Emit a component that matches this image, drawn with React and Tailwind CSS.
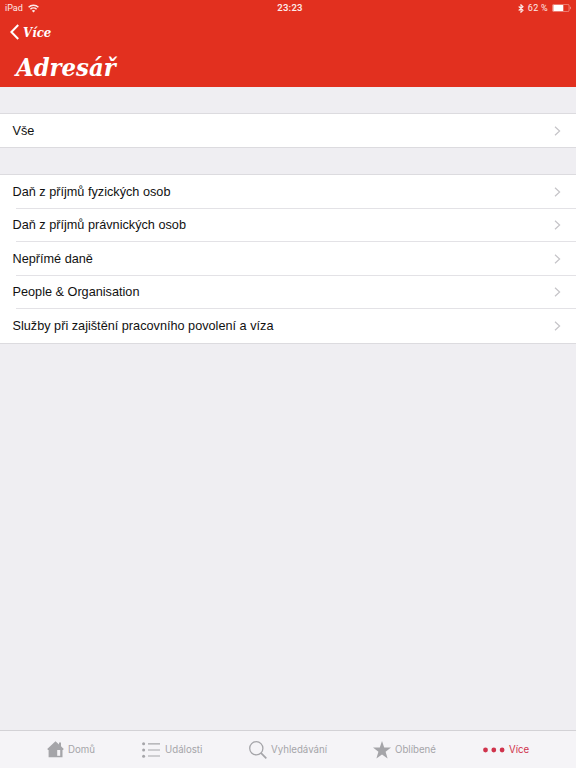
const SERVICES = [
  'Daň z příjmů fyzických osob',
  'Daň z příjmů právnických osob',
  'Nepřímé daně',
  'People & Organisation',
  'Služby při zajištění pracovního povolení a víza'
];

const WifiIcon = () => (
  <svg width="11" height="9" viewBox="0 0 11 9" fill="none" stroke="currentColor" strokeWidth="1.5">
    <path d="M0.6 3.2a7 7 0 0 1 9.8 0" />
    <path d="M2.4 5.2a4.4 4.4 0 0 1 6.2 0" />
    <path d="M5.5 8.6 3.8 6.8a2.5 2.5 0 0 1 3.4 0z" fill="currentColor" stroke="none" />
  </svg>
);

const BluetoothIcon = () => (
  <svg width="6" height="9" viewBox="0 0 6 9" fill="none" stroke="currentColor" strokeWidth="1.1">
    <path d="M0.7 2.5 5 6.3 3 8.2V0.8l2 1.9L0.7 6.5" />
  </svg>
);

const BatteryIcon = () => (
  <svg width="20" height="8" viewBox="0 0 20 8">
    <rect x="0.4" y="0.4" width="16.7" height="7.2" rx="1.4" fill="none" stroke="#fff" strokeOpacity="0.5" strokeWidth="0.8" />
    <rect x="1.3" y="1.1" width="10" height="5.8" rx="0.5" fill="#fff" />
    <path d="M18 2.6c1.1.4 1.1 2.4 0 2.8z" fill="#fff" fillOpacity="0.55" />
  </svg>
);

const HomeIcon = () => (
  <svg width="17" height="17" viewBox="0 0 17 17" fill="currentColor">
    <path d="M8.5 0.2 12 3.4V1.5h2v3.8l2.8 2.8-.9.9h-.4v7.3H1.6V9h-.5l-.9-.9z" />
    <path d="M10.2 9h3v5.8h-3z" fill="#f5f4f7" />
  </svg>
);

const ListIcon = () => (
  <svg width="18" height="16" viewBox="0 0 18 16" fill="currentColor">
    <circle cx="1.6" cy="1.8" r="1.5" />
    <circle cx="1.6" cy="8" r="1.5" />
    <circle cx="1.6" cy="14.2" r="1.5" />
    <path d="M6 1.3h12v1.2H6zM6 7.4h12v1.2H6zM6 13.4h12v1.2H6z" />
  </svg>
);

const SearchIcon = () => (
  <svg width="18" height="18" viewBox="0 0 18 18" fill="none" stroke="currentColor">
    <circle cx="7.3" cy="7.3" r="6.6" strokeWidth="1.3" />
    <path d="m12.1 12.1 5.2 5.2" strokeWidth="1.7" />
  </svg>
);

const StarIcon = () => (
  <svg width="18" height="18" viewBox="0 0 18 18" fill="currentColor">
    <path d="m9 0 2.2 6.5H18l-5.4 4.2 2 6.9L9 13.5l-5.6 4.1 2-6.9L0 6.5h6.8z" />
  </svg>
);

const MoreIcon = () => (
  <svg width="22" height="6" viewBox="0 0 22 6" fill="currentColor">
    <circle cx="2.5" cy="3" r="2.4" />
    <circle cx="10.8" cy="3" r="2.4" />
    <circle cx="19.1" cy="3" r="2.4" />
  </svg>
);

const ListRow = ({ label, last, className = 'h-[33.5px]' }) => (
  <li className={`relative flex items-center justify-between pr-[15px] pl-[12.5px] ${className}`}>
    <span className="pt-[1.5px] text-[12.7px] whitespace-nowrap">{label}</span>
    <svg width="7" height="10" viewBox="0 0 7 10" fill="none" stroke="#c5c4c8" strokeWidth="1.2">
      <path d="m1 .8 4.6 4.2L1 9.2" />
    </svg>
    {!last && <span className="absolute right-0 bottom-0 left-4 h-px bg-[#e3e2e6]" />}
  </li>
);

const Tab = ({ icon, label, className }) => (
  <div className={`flex shrink-0 items-center ${className}`}>
    {icon}
    <span className="pt-px whitespace-nowrap">{label}</span>
  </div>
);

const App = () => (
  <div className="flex h-[768px] w-[576px] flex-col overflow-hidden bg-[#efeef2] font-['Liberation_Sans',Arial,sans-serif] text-[#111]">
    <header className="h-[87px] shrink-0 bg-[#e2301f] text-white">
      <div className="grid h-4 grid-cols-3 items-center pr-[4px] pl-[5px] font-['Roboto',sans-serif] text-[9px] text-white/90">
        <div className="flex items-center gap-[5px]">
          <span className="pt-px">iPad</span>
          <WifiIcon />
        </div>
        <span className="pl-[3px] text-center text-[9.5px] font-semibold tracking-[0.2px]">23:23</span>
        <div className="flex items-center justify-end gap-[4px]">
          <BluetoothIcon />
          <span className="pt-px tracking-[0.3px]">62 %</span>
          <BatteryIcon />
        </div>
      </div>
      <div className="flex h-8 items-center gap-[4px] pl-[10px] font-['DejaVu_Serif_Condensed','DejaVu_Serif',Georgia,serif] font-bold italic">
        <svg width="9" height="16" viewBox="0 0 9 16" fill="none" stroke="currentColor" strokeWidth="2">
          <path d="M8.2 1 1.4 8l6.8 7" />
        </svg>
        <span className="origin-left scale-x-[1.05] pt-[2px] text-[12.5px]">Více</span>
      </div>
      <h1 className="ml-[16px] origin-left scale-x-[1.055] pt-px font-['DejaVu_Serif_Condensed','DejaVu_Serif',Georgia,serif] text-[24px] leading-[38px] font-bold italic">
        Adresář
      </h1>
    </header>

    <main className="flex-1 pt-[26px]">
      <ul className="border-y border-[#dcdbdf] bg-white">
        <ListRow label="Vše" last className="h-[33px]" />
      </ul>
      <ul className="mt-[26px] border-y border-[#dcdbdf] bg-white">
        {SERVICES.map((label, index) => (
          <ListRow key={label} label={label} last={index === SERVICES.length - 1} />
        ))}
      </ul>
    </main>

    <nav className="flex h-[38px] shrink-0 border-t border-[#d3d2d6] bg-[#f5f4f7] pl-[47px] font-['Inter',sans-serif] text-[9.7px] text-[#a5a5a9]">
      <Tab icon={<HomeIcon />} label="Domů" className="w-[95px] gap-[4px]" />
      <Tab icon={<ListIcon />} label="Události" className="w-[107px] gap-[5px]" />
      <Tab icon={<SearchIcon />} label="Vyhledávání" className="w-[124px] gap-[4px]" />
      <Tab icon={<StarIcon />} label="Oblíbené" className="w-[110px] gap-[4px]" />
      <Tab icon={<MoreIcon />} label="Více" className="gap-[4px] text-[#d0334c]" />
    </nav>
  </div>
);

export default App;
